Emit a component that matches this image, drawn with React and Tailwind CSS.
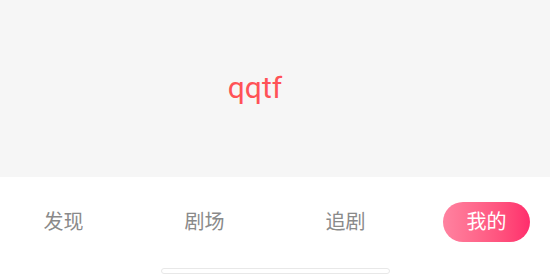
export default function App() {
  const font = { fontFamily: '"Noto Sans", "Noto Sans CJK SC", sans-serif' };
  return (
    <div className="w-[550px] h-[275px] flex flex-col bg-white overflow-hidden" style={font}>
      <div className="h-[177px] bg-[#f6f6f6] flex items-center justify-center">
        <span className="text-[30px] leading-none text-[#ff5257] font-['Roboto'] mt-[-2px] mr-[40px]">qqtf</span>
      </div>
      <div className="flex-1 flex flex-col items-center">
        <div className="w-full flex justify-between px-[20px] pt-[25px]">
          {['发现', '剧场', '追剧'].map((t) => (
            <div key={t} className="w-[87px] h-[40px] flex items-center justify-center text-[20px] text-[#8a8a8a]">
              {t}
            </div>
          ))}
          <div className="w-[87px] h-[40px] rounded-full flex items-center justify-center text-[20px] text-white bg-gradient-to-r from-[#ff82a0] to-[#ff2c6c]">
            我的
          </div>
        </div>
        <div className="mt-[26px] w-[229px] h-[6px] rounded-full border border-[#e8e8e8] bg-white"></div>
      </div>
    </div>
  );
}
